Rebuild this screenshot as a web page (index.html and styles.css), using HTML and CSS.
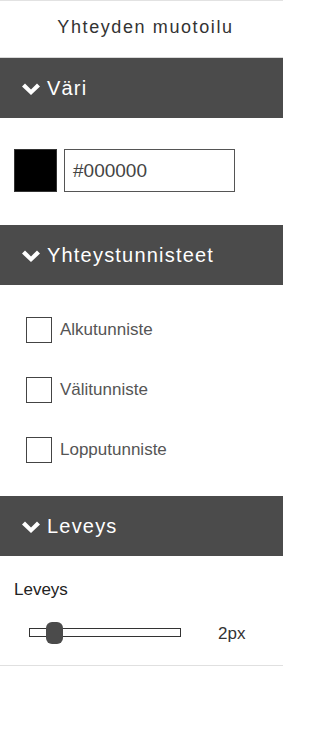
FILE: index.html
```html
<!DOCTYPE html>
<html lang="fi">
<head>
<meta charset="utf-8">
<title>Yhteyden muotoilu</title>
<link rel="stylesheet" href="styles.css">
</head>
<body>
<div class="panel">
  <div class="title">Yhteyden muotoilu</div>

  <div class="sec-head">
    <svg class="chev" viewBox="0 0 18 12" width="18" height="12"><path d="M0 3.6 L3 0.6 L9 6.4 L15 0.6 L18 3.6 L9 12 Z" fill="#fff"/></svg>
    <span>Väri</span>
  </div>
  <div class="sec-body color-body">
    <div class="swatch"></div>
    <div class="hex">#000000</div>
  </div>

  <div class="sec-head">
    <svg class="chev" viewBox="0 0 18 12" width="18" height="12"><path d="M0 3.6 L3 0.6 L9 6.4 L15 0.6 L18 3.6 L9 12 Z" fill="#fff"/></svg>
    <span>Yhteystunnisteet</span>
  </div>
  <div class="sec-body check-body">
    <label class="check"><span class="box"></span><span>Alkutunniste</span></label>
    <label class="check"><span class="box"></span><span>Välitunniste</span></label>
    <label class="check"><span class="box"></span><span>Lopputunniste</span></label>
  </div>

  <div class="sec-head">
    <svg class="chev" viewBox="0 0 18 12" width="18" height="12"><path d="M0 3.6 L3 0.6 L9 6.4 L15 0.6 L18 3.6 L9 12 Z" fill="#fff"/></svg>
    <span>Leveys</span>
  </div>
  <div class="sec-body width-body">
    <div class="w-label">Leveys</div>
    <div class="slider-row">
      <div class="track"><div class="thumb"></div></div>
      <div class="val">2px</div>
    </div>
  </div>
</div>
</body>
</html>
```

FILE: styles.css
```css
html, body {
  margin: 0;
  padding: 0;
  background: #fff;
}
body {
  font-family: "Liberation Sans", Arial, sans-serif;
}
.panel {
  width: 283px;
}
.title {
  box-sizing: border-box;
  height: 58px;
  border-top: 1px solid #e2e2e2;
  border-bottom: 1px solid #d8d8d8;
  display: flex;
  align-items: center;
  justify-content: center;
  padding-left: 8px;
  padding-bottom: 4px;
  font-size: 18px;
  letter-spacing: 1.6px;
  color: #333;
}
.sec-head {
  height: 60px;
  background: #4b4b4b;
  display: flex;
  align-items: center;
  padding-left: 22px;
  color: #fff;
  font-size: 20px;
  letter-spacing: 1.2px;
}
.chev {
  display: block;
  margin-right: 7px;
  margin-top: 1px;
}
.color-body {
  display: flex;
  align-items: center;
  padding: 31px 14px 33px;
  gap: 7px;
}
.swatch {
  box-sizing: border-box;
  width: 43px;
  height: 43px;
  background: #000;
  border: 1px solid #333;
}
.hex {
  box-sizing: border-box;
  width: 171px;
  height: 43px;
  border: 1px solid #555;
  display: flex;
  align-items: center;
  padding-left: 8px;
  font-size: 19px;
  color: #444;
}
.check-body {
  display: flex;
  flex-direction: column;
  gap: 34px;
  padding: 32px 26px 33px;
}
.check {
  display: flex;
  align-items: center;
  gap: 8px;
  height: 26px;
  font-size: 17px;
  color: #555;
}
.box {
  box-sizing: border-box;
  width: 26px;
  height: 26px;
  border: 1px solid #444;
  background: #fff;
}
.width-body {
  padding: 24px 14px 21px;
  border-bottom: 1px solid #e0e0e0;
}
.w-label {
  font-size: 17px;
  line-height: 20px;
  color: #222;
}
.slider-row {
  display: flex;
  align-items: center;
  height: 24px;
  margin-top: 20px;
  padding-left: 15px;
  gap: 37px;
}
.track {
  position: relative;
  box-sizing: border-box;
  width: 152px;
  height: 9px;
  border: 1px solid #333;
  background: #fff;
}
.thumb {
  position: absolute;
  left: 16px;
  top: -7px;
  width: 17px;
  height: 22px;
  border-radius: 6px;
  background: #4b4b4b;
}
.val {
  font-size: 17px;
  color: #333;
  margin-top: 4px;
}
```
